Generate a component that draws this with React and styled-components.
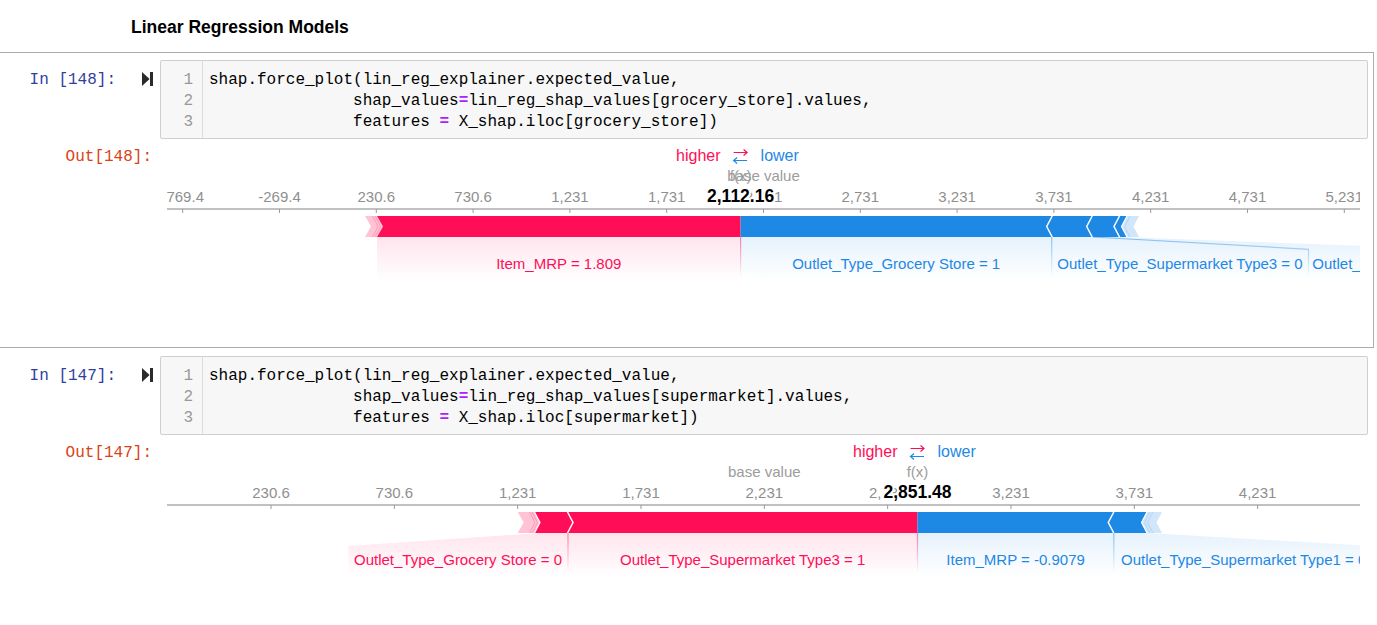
import React from 'react';
import styled, { createGlobalStyle } from 'styled-components';

const RED = '#ff0d57';
const BLUE = '#1e88e5';
const RED_TAIL = '#ffc3d5';
const BLUE_TAIL = '#d1e6fa';
const MONO = '"Liberation Mono", "DejaVu Sans Mono", monospace';
const SANS = '"Liberation Sans", Arial, sans-serif';

// bar geometry inside the plot svg
const T = 71;
const B = 92;
const M = 81.5;
const gt = (x) => `${x - 5.5},${T} ${x},${M} ${x - 5.5},${B}`; // ">" with tip at x
const lt = (x) => `${x + 5.5},${T} ${x},${M} ${x + 5.5},${B}`; // "<" with tip at x

const cells = [
  {
    n: 148,
    selected: true,
    code: [
      'shap.force_plot(lin_reg_explainer.expected_value,',
      '               shap_values=lin_reg_shap_values[grocery_store].values,',
      '               features = X_shap.iloc[grocery_store])',
    ],
    outHeight: 195,
    plot: {
      id: 'p148',
      ticks: {
        start: 15.7,
        step: 96.8,
        labels: ['-769.4', '-269.4', '230.6', '730.6', '1,231', '1,731', '2,231', '2,731', '3,231', '3,731', '4,231', '4,731', '5,231'],
      },
      fx: 573.6,
      fxLabel: '2,112.16',
      base: 596.5,
      blocks: [
        { fill: RED_TAIL, points: '198,71 210,71 216,81.5 210,92 198,92 204,81.5' },
        { fill: RED, points: '210,71 573.6,71 573.6,92 210,92 216,81.5' },
        { fill: BLUE, points: '573.6,71 960,71 954.5,81.5 960,92 573.6,92' },
        { fill: BLUE_TAIL, points: '960,71 972,71 966.5,81.5 972,92 960,92 954.5,81.5' },
      ],
      seps: [
        { stroke: '#ff8db0', w: 0.8, points: gt(211) },
        { stroke: '#ff8db0', w: 0.8, points: gt(213.5) },
        { stroke: '#fff', w: 1.5, points: lt(879.7) },
        { stroke: '#fff', w: 1.5, points: lt(919.7) },
        { stroke: '#fff', w: 1.5, points: lt(947) },
        { stroke: '#fff', w: 1.2, points: lt(954.5) },
        { stroke: '#a9d0f5', w: 0.8, points: lt(957.5) },
      ],
      regions: [
        { tone: 'red', points: '210,92 573.6,92 573.6,136 210,136', label: 'Item_MRP = 1.809', x: 391.8 },
        { tone: 'blue', points: '573.6,92 884.7,92 884.7,136 573.6,136', label: 'Outlet_Type_Grocery Store = 1', x: 729.2 },
        { tone: 'blue', points: '884.7,92 924.7,92 1141.5,104.3 1141.5,136 884.7,136', label: 'Outlet_Type_Supermarket Type3 = 0', x: 1013 },
        { tone: 'blue', points: '924.7,92 951,92 1394,108 1394,136 1141.5,136 1141.5,104.3', label: 'Outlet_Type_Supermarket Type1 = 0', x: 1268 },
      ],
      edges: [
        { tone: 'red', points: '573.6,92 573.6,130' },
        { tone: 'blue', points: '884.7,92 884.7,130' },
        { tone: 'blue', points: '926,92 1141.5,104.3 1141.5,130' },
      ],
    },
  },
  {
    n: 147,
    selected: false,
    code: [
      'shap.force_plot(lin_reg_explainer.expected_value,',
      '               shap_values=lin_reg_shap_values[supermarket].values,',
      '               features = X_shap.iloc[supermarket])',
    ],
    outHeight: 180,
    plot: {
      id: 'p147',
      ticks: {
        start: 104,
        step: 123.33,
        labels: ['230.6', '730.6', '1,231', '1,731', '2,231', '2,731', '3,231', '3,731', '4,231'],
      },
      fx: 750.5,
      fxLabel: '2,851.48',
      base: 597.3,
      blocks: [
        { fill: RED_TAIL, points: '350.7,71 367,71 373,81.5 367,92 350.7,92 356.7,81.5' },
        { fill: RED, points: '367,71 750.5,71 750.5,92 367,92 373,81.5' },
        { fill: BLUE, points: '750.5,71 980,71 974.5,81.5 980,92 750.5,92' },
        { fill: BLUE_TAIL, points: '980,71 995,71 989.5,81.5 995,92 980,92 974.5,81.5' },
      ],
      seps: [
        { stroke: '#ff8db0', w: 0.8, points: gt(368) },
        { stroke: '#ff8db0', w: 0.8, points: gt(370.5) },
        { stroke: '#fff', w: 1.2, points: gt(373) },
        { stroke: '#fff', w: 1.5, points: gt(406) },
        { stroke: '#fff', w: 1.5, points: lt(941.3) },
        { stroke: '#fff', w: 1.2, points: lt(974.5) },
        { stroke: '#a9d0f5', w: 0.8, points: lt(977.5) },
        { stroke: '#a9d0f5', w: 0.8, points: lt(980.5) },
      ],
      regions: [
        { tone: 'red', points: '373,92 401,92 401,136 181.3,136 181.3,105', label: 'Outlet_Type_Grocery Store = 0', x: 291 },
        { tone: 'red', points: '401,92 750.5,92 750.5,136 401,136', label: 'Outlet_Type_Supermarket Type3 = 1', x: 575.7 },
        { tone: 'blue', points: '750.5,92 946.8,92 946.8,136 750.5,136', label: 'Item_MRP = -0.9079', x: 848.6 },
        { tone: 'blue', points: '946.8,92 980,92 1206.7,105 1206.7,136 946.8,136', label: 'Outlet_Type_Supermarket Type1 = 0', x: 1076.7 },
      ],
      edges: [
        { tone: 'red', points: '401,92 401,130' },
        { tone: 'red', points: '750.5,92 750.5,130' },
        { tone: 'blue', points: '946.8,92 946.8,130' },
      ],
    },
  },
];

function ForcePlot({ plot }) {
  const { id, ticks, fx, fxLabel, base } = plot;
  const colorOf = (tone) => (tone === 'red' ? RED : BLUE);
  return (
    <PlotSvg width="1193" height="140">
      <defs>
        {['red', 'blue'].map((tone) => (
          <React.Fragment key={tone}>
            <linearGradient id={`${id}-fill-${tone}`} gradientUnits="userSpaceOnUse" x1="0" y1="92" x2="0" y2="136">
              <stop offset="0" stopColor={colorOf(tone)} stopOpacity="0.11" />
              <stop offset="1" stopColor={colorOf(tone)} stopOpacity="0" />
            </linearGradient>
            <linearGradient id={`${id}-line-${tone}`} gradientUnits="userSpaceOnUse" x1="0" y1="92" x2="0" y2="132">
              <stop offset="0" stopColor={colorOf(tone)} stopOpacity="0.5" />
              <stop offset="1" stopColor={colorOf(tone)} stopOpacity="0" />
            </linearGradient>
          </React.Fragment>
        ))}
      </defs>

      {/* higher / lower legend */}
      <text x={fx - 20} y="15.7" textAnchor="end" fill={RED} fontSize="16">higher</text>
      <path
        d={`M${fx - 7} 7.5 H${fx + 6.5} M${fx + 3} 4.5 L${fx + 6.5} 7.5 L${fx + 3} 10.5`}
        stroke={RED} strokeWidth="1.2" fill="none"
      />
      <path
        d={`M${fx + 6.5} 15.5 H${fx - 7} M${fx - 3.5} 12.5 L${fx - 7} 15.5 L${fx - 3.5} 18.5`}
        stroke={BLUE} strokeWidth="1.2" fill="none"
      />
      <text x={fx + 20} y="15.7" fill={BLUE} fontSize="16">lower</text>

      <text x={base} y="35.7" textAnchor="middle" fill="#9c9c9c" fontSize="15">base value</text>
      <text x={fx} y="35.7" textAnchor="middle" fill="#9c9c9c" fontSize="15">f(x)</text>

      {/* axis */}
      <line x1="0" y1="64" x2="1193" y2="64" stroke="#adadad" strokeWidth="1.5" />
      {ticks.labels.map((label, i) => {
        const x = ticks.start + ticks.step * i;
        return (
          <g key={label}>
            <line x1={x} y1="64" x2={x} y2="68" stroke="#999" strokeWidth="1" />
            <text x={x} y="57" textAnchor="middle" fill="#8f8f8f" fontSize="15">{label}</text>
          </g>
        );
      })}
      <text
        x={fx} y="56.7" textAnchor="middle" fontSize="17.5" fontWeight="bold" fill="#000"
        stroke="#fff" strokeWidth="4" strokeLinejoin="round" paintOrder="stroke"
      >
        {fxLabel}
      </text>

      {/* label areas */}
      {plot.regions.map((r) => (
        <polygon key={r.label + r.x} points={r.points} fill={`url(#${id}-fill-${r.tone})`} />
      ))}
      {plot.edges.map((e) => (
        <polyline key={e.points} points={e.points} fill="none" stroke={`url(#${id}-line-${e.tone})`} strokeWidth="1.2" />
      ))}
      {plot.regions.map((r) => (
        <text key={`t-${r.label}-${r.x}`} x={r.x} y="124.3" textAnchor="middle" fill={colorOf(r.tone)} fontSize="15">
          {r.label}
        </text>
      ))}

      {/* force bar */}
      {plot.blocks.map((b) => (
        <polygon key={b.points} points={b.points} fill={b.fill} />
      ))}
      {plot.seps.map((s, i) => (
        <polyline key={i} points={s.points} fill="none" stroke={s.stroke} strokeWidth={s.w} />
      ))}
    </PlotSvg>
  );
}

function CodeLine({ text }) {
  const parts = text.split('=');
  return (
    <Line>
      {parts.map((p, i) => (
        <React.Fragment key={i}>
          {i > 0 && <Op>=</Op>}
          {p}
        </React.Fragment>
      ))}
    </Line>
  );
}

function RunIcon() {
  return (
    <svg width="11" height="14" viewBox="0 0 11 14">
      <path d="M0 0 L7.6 7 L0 14 Z" fill="#2b2b2b" />
      <rect x="8" y="0" width="3" height="14" fill="#2b2b2b" />
    </svg>
  );
}

function Cell({ cell }) {
  return (
    <CellBox $selected={cell.selected}>
      <Row>
        <InPrompt>
          <span>In [{cell.n}]:</span>
          <RunIcon />
        </InPrompt>
        <CodeBox>
          <Gutter>
            {cell.code.map((_, i) => (
              <Line key={i}>{i + 1}</Line>
            ))}
          </Gutter>
          <Code>
            {cell.code.map((l, i) => (
              <CodeLine key={i} text={l} />
            ))}
          </Code>
        </CodeBox>
      </Row>
      <Row>
        <OutPrompt>Out[{cell.n}]:</OutPrompt>
        <OutArea $h={cell.outHeight}>
          <ForcePlot plot={cell.plot} />
        </OutArea>
      </Row>
    </CellBox>
  );
}

export default function App() {
  return (
    <>
      <GlobalStyle />
      <Notebook>
        <Heading>Linear Regression Models</Heading>
        {cells.map((c) => (
          <Cell key={c.n} cell={c} />
        ))}
      </Notebook>
    </>
  );
}

const GlobalStyle = createGlobalStyle`
  html, body {
    margin: 0;
    padding: 0;
    background: #fff;
    font-family: ${SANS};
  }
`;

const Notebook = styled.div`
  width: 1377px;
  overflow: hidden;
`;

const Heading = styled.h4`
  margin: 0;
  padding: 17px 0 15px 131px;
  font-family: ${SANS};
  font-size: 17.5px;
  font-weight: bold;
  line-height: 20px;
  color: #000;
`;

const CellBox = styled.div`
  width: 1374px;
  box-sizing: border-box;
  border: 1px solid ${(p) => (p.$selected ? '#ababab' : 'transparent')};
  border-left: none;
  padding: 7px 5px 7px 0;
  display: flex;
  flex-direction: column;
  gap: 6px;
`;

const Row = styled.div`
  display: flex;
  align-items: flex-start;
`;

const PromptBase = styled.div`
  flex: none;
  width: 160px;
  box-sizing: border-box;
  display: flex;
  align-items: center;
  justify-content: flex-end;
  font-family: ${MONO};
  font-size: 16px;
  line-height: 21px;
  height: 21px;
  white-space: pre;
`;

const InPrompt = styled(PromptBase)`
  margin-top: 10px;
  padding-right: 7px;
  gap: 26px;
  color: #303f9f;

  svg {
    margin-top: -3px;
  }
`;

const OutPrompt = styled(PromptBase)`
  margin-top: 2px;
  padding-right: 8px;
  color: #d84315;
`;

const CodeBox = styled.div`
  flex: 1;
  display: flex;
  background: #f7f7f7;
  border: 1px solid #cfcfcf;
  border-radius: 2px;
`;

const Gutter = styled.div`
  width: 32px;
  padding: 9px 9px 5px 0;
  text-align: right;
  color: #999;
  border-right: 1px solid #ddd;
  font-family: ${MONO};
  font-size: 16px;
`;

const Code = styled.div`
  flex: 1;
  padding: 9px 6px 5px;
  font-family: ${MONO};
  font-size: 16px;
  color: #000;
`;

const Line = styled.div`
  height: 21px;
  line-height: 21px;
  white-space: pre;
`;

const Op = styled.span`
  color: #aa22ff;
  font-weight: bold;
`;

const OutArea = styled.div`
  flex: 1;
  height: ${(p) => p.$h}px;
  padding-left: 7px;
  overflow: hidden;
`;

const PlotSvg = styled.svg`
  display: block;
  font-family: ${SANS};
`;
